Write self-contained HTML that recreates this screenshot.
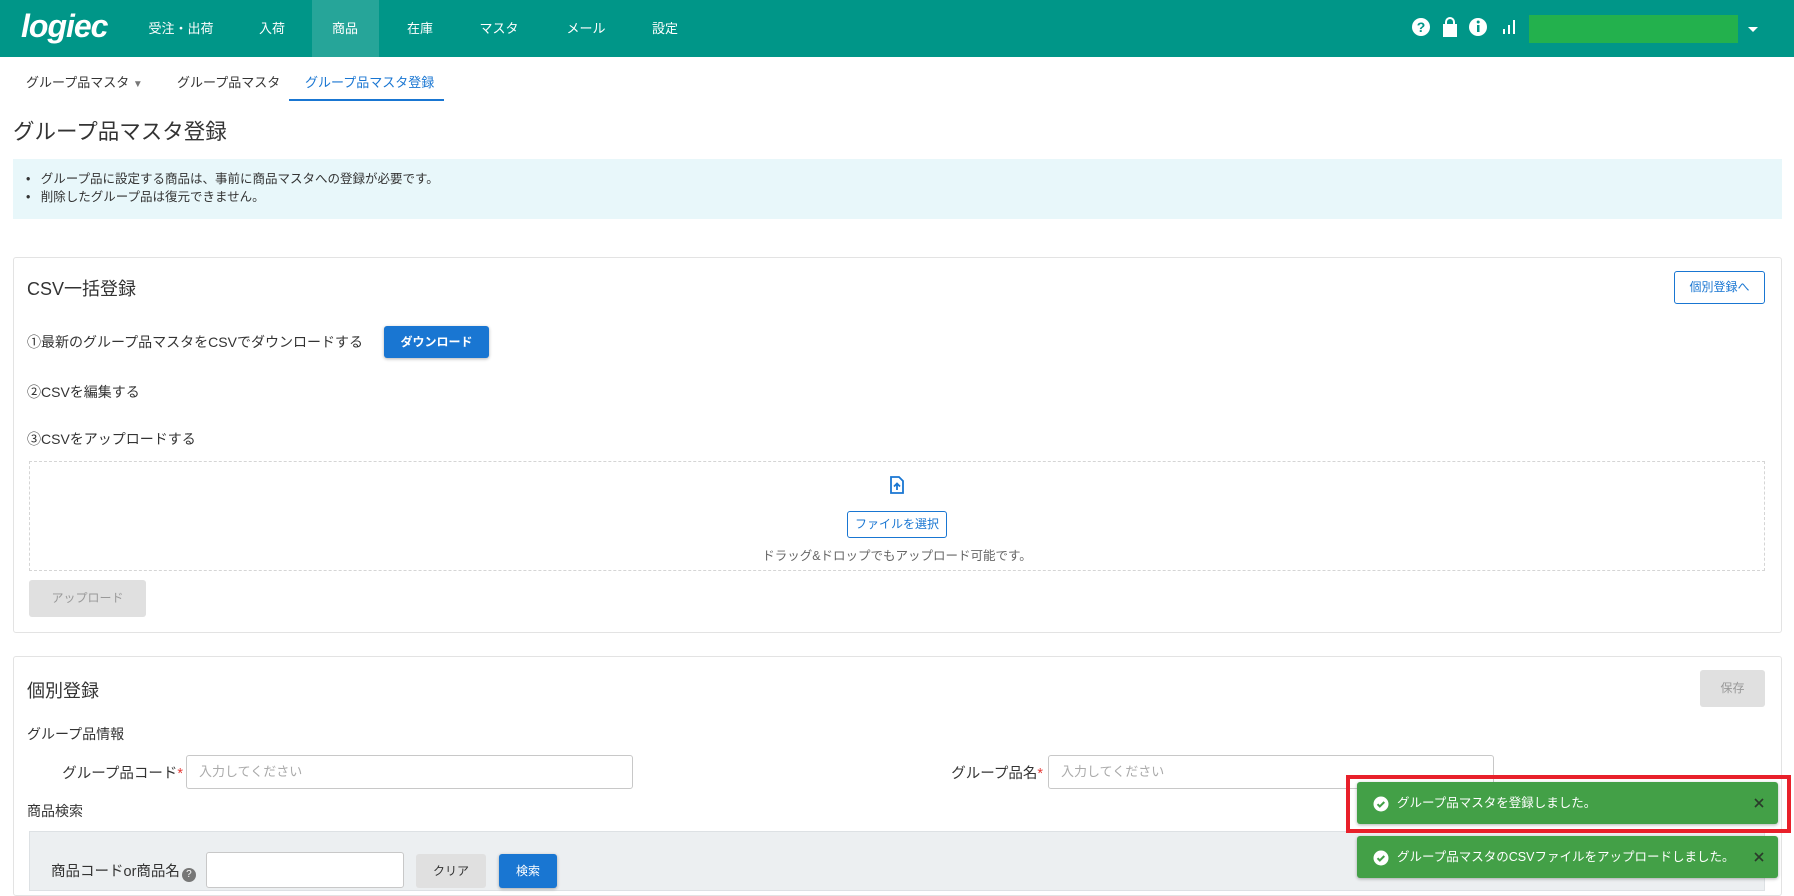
<!DOCTYPE html>
<html><head><meta charset="utf-8"><style>
*{box-sizing:border-box;margin:0;padding:0}
body{width:1794px;height:885px;overflow:hidden;background:#fff;font-family:"Liberation Sans","Noto Sans CJK JP",sans-serif;color:#333;font-size:14px;position:relative}
.abs{position:absolute}
.hdr{left:0;top:0;width:1794px;height:57px;background:#009688}
.nav{top:0;height:57px;line-height:57px;color:#fff;font-size:13px;transform:translateX(-50%)}
.sub{top:72px;font-size:13px;color:#333}
.card{left:13px;width:1769px;border:1px solid #e3e3e3;border-radius:3px;background:#fff}
.btn{border-radius:3px;text-align:center;font-size:12px}
.blue{background:#1976d2;color:#fff;box-shadow:0 1px 3px rgba(0,0,0,.3)}
.gray{background:#e0e0e0;color:#999}
.inp{border:1px solid #c8c8c8;border-radius:3px;background:#fff;color:#aaa;font-size:13px;padding-left:12px}
.toast{left:1357px;width:421px;height:42px;background:#43a047;border-radius:3px;color:#fff;font-size:12.5px;line-height:42px;padding-left:40px;box-shadow:0 1px 3px rgba(0,0,0,.3)}
</style></head><body>
<div class="abs hdr"></div>
<div class="abs" style="left:21px;top:8px;color:#fff;font:italic bold 32px 'Liberation Sans',sans-serif;letter-spacing:-1px">logiec</div>
<div class="abs" style="left:312px;top:0;width:67px;height:57px;background:rgba(255,255,255,.15)"></div>
<div class="abs nav" style="left:181px">受注・出荷</div>
<div class="abs nav" style="left:272px">入荷</div>
<div class="abs nav" style="left:345px">商品</div>
<div class="abs nav" style="left:420px">在庫</div>
<div class="abs nav" style="left:499px">マスタ</div>
<div class="abs nav" style="left:586px">メール</div>
<div class="abs nav" style="left:665px">設定</div>
<svg class="abs" style="left:1411px;top:15px" width="110" height="24" viewBox="0 0 110 24">
<circle cx="10" cy="12" r="9" fill="#fff"/><text x="10" y="17" text-anchor="middle" font-size="14" font-weight="bold" fill="#009688" font-family="Liberation Sans">?</text>
<path d="M32 9h14v13h-14z" fill="#fff"/><path d="M35 10v-3a4 4 0 0 1 8 0v3" stroke="#fff" stroke-width="2" fill="none"/>
<circle cx="67" cy="12" r="9" fill="#fff"/><rect x="66" y="10" width="2.5" height="7" fill="#009688"/><circle cx="67.2" cy="7" r="1.5" fill="#009688"/>
<rect x="92" y="14" width="2" height="5" fill="#fff"/><rect x="97" y="10" width="2" height="9" fill="#fff"/><rect x="102" y="5" width="2" height="14" fill="#fff"/>
</svg>
<div class="abs" style="left:1529px;top:15px;width:209px;height:28px;background:#23b14d"></div>
<div class="abs" style="left:1748px;top:27px;border:5px solid transparent;border-top-color:#fff"></div>

<div class="abs sub" style="left:26px">グループ品マスタ <span style="color:#777;font-size:10px">▼</span></div>
<div class="abs sub" style="left:177px">グループ品マスタ</div>
<div class="abs sub" style="left:305px;color:#1976d2">グループ品マスタ登録</div>
<div class="abs" style="left:289px;top:99px;width:155px;height:2px;background:#1976d2"></div>

<div class="abs" style="left:13px;top:115px;font-size:21.5px;color:#333">グループ品マスタ登録</div>
<div class="abs" style="left:13px;top:159px;width:1769px;height:60px;background:#e8f7fa"></div>
<div class="abs" style="left:26px;top:170px;font-size:12.5px;line-height:18px">•&nbsp;&nbsp; グループ品に設定する商品は、事前に商品マスタへの登録が必要です。<br>•&nbsp;&nbsp; 削除したグループ品は復元できません。</div>

<div class="abs card" style="top:257px;height:376px"></div>
<div class="abs" style="left:27px;top:275px;font-size:18px">CSV一括登録</div>
<div class="abs btn" style="left:1674px;top:271px;width:91px;height:33px;line-height:31px;border:1px solid #1976d2;color:#1976d2">個別登録へ</div>
<div class="abs" style="left:27px;top:332px">①最新のグループ品マスタをCSVでダウンロードする</div>
<div class="abs btn blue" style="left:384px;top:326px;width:105px;height:32px;line-height:32px;font-weight:bold">ダウンロード</div>
<div class="abs" style="left:27px;top:382px">②CSVを編集する</div>
<div class="abs" style="left:27px;top:429px">③CSVをアップロードする</div>
<div class="abs" style="left:29px;top:461px;width:1736px;height:110px;border:1px dashed #d5d5d5"></div>
<svg class="abs" style="left:889px;top:476px" width="16" height="18" viewBox="0 0 16 18"><path d="M2 1h8l4 4v12H2z" fill="none" stroke="#1976d2" stroke-width="1.8"/><path d="M8 14V8M5 10.5l3-3 3 3" stroke="#1976d2" stroke-width="1.8" fill="none"/></svg>
<div class="abs btn" style="left:847px;top:511px;width:100px;height:27px;line-height:25px;border:1px solid #1976d2;color:#1976d2">ファイルを選択</div>
<div class="abs" style="left:0;width:1794px;text-align:center;top:545px;font-size:12.5px;color:#666">ドラッグ&amp;ドロップでもアップロード可能です。</div>
<div class="abs btn gray" style="left:29px;top:580px;width:117px;height:37px;line-height:37px">アップロード</div>

<div class="abs card" style="top:656px;height:240px"></div>
<div class="abs" style="left:27px;top:677px;font-size:18px">個別登録</div>
<div class="abs btn gray" style="left:1700px;top:670px;width:65px;height:37px;line-height:37px">保存</div>
<div class="abs" style="left:27px;top:724px">グループ品情報</div>
<div class="abs" style="left:20px;width:163px;text-align:right;top:762px;font-size:14.5px">グループ品コード<span style="color:#e53935">*</span></div>
<div class="abs inp" style="left:186px;top:755px;width:447px;height:34px;line-height:32px">入力してください</div>
<div class="abs" style="left:880px;width:163px;text-align:right;top:762px;font-size:14.5px">グループ品名<span style="color:#e53935">*</span></div>
<div class="abs inp" style="left:1048px;top:755px;width:446px;height:34px;line-height:32px">入力してください</div>
<div class="abs" style="left:27px;top:801px">商品検索</div>
<div class="abs" style="left:29px;top:831px;width:1736px;height:60px;background:#eceff1;border:1px solid #dde1e4"></div>
<div class="abs" style="left:51px;top:860px;font-size:14.5px">商品コードor商品名<span style="display:inline-block;width:14px;height:14px;border-radius:50%;background:#777;color:#fff;font-size:10px;text-align:center;line-height:14px;vertical-align:-1px;margin-left:2px">?</span></div>
<div class="abs inp" style="left:206px;top:852px;width:198px;height:36px"></div>
<div class="abs btn" style="left:416px;top:854px;width:70px;height:34px;line-height:34px;background:#e0e0e0;color:#333">クリア</div>
<div class="abs btn blue" style="left:499px;top:854px;width:58px;height:34px;line-height:34px">検索</div>

<div class="abs" style="left:1346px;top:775px;width:445px;height:58px;border:4px solid #e8202a"></div>
<div class="abs toast" style="top:782px">グループ品マスタを登録しました。</div>
<div class="abs toast" style="top:836px">グループ品マスタのCSVファイルをアップロードしました。</div>
<svg class="abs" style="left:1373px;top:796px" width="16" height="16"><circle cx="8" cy="8" r="7.5" fill="#fff"/><path d="M4.5 8.2l2.3 2.3 4.5-4.5" stroke="#43a047" stroke-width="2" fill="none"/></svg>
<svg class="abs" style="left:1373px;top:850px" width="16" height="16"><circle cx="8" cy="8" r="7.5" fill="#fff"/><path d="M4.5 8.2l2.3 2.3 4.5-4.5" stroke="#43a047" stroke-width="2" fill="none"/></svg>
<svg class="abs" style="left:1754px;top:798px" width="10" height="10"><path d="M1 1l8 8M9 1l-8 8" stroke="#2a3a2a" stroke-width="1.6"/></svg>
<svg class="abs" style="left:1754px;top:852px" width="10" height="10"><path d="M1 1l8 8M9 1l-8 8" stroke="#2a3a2a" stroke-width="1.6"/></svg>
</body></html>
